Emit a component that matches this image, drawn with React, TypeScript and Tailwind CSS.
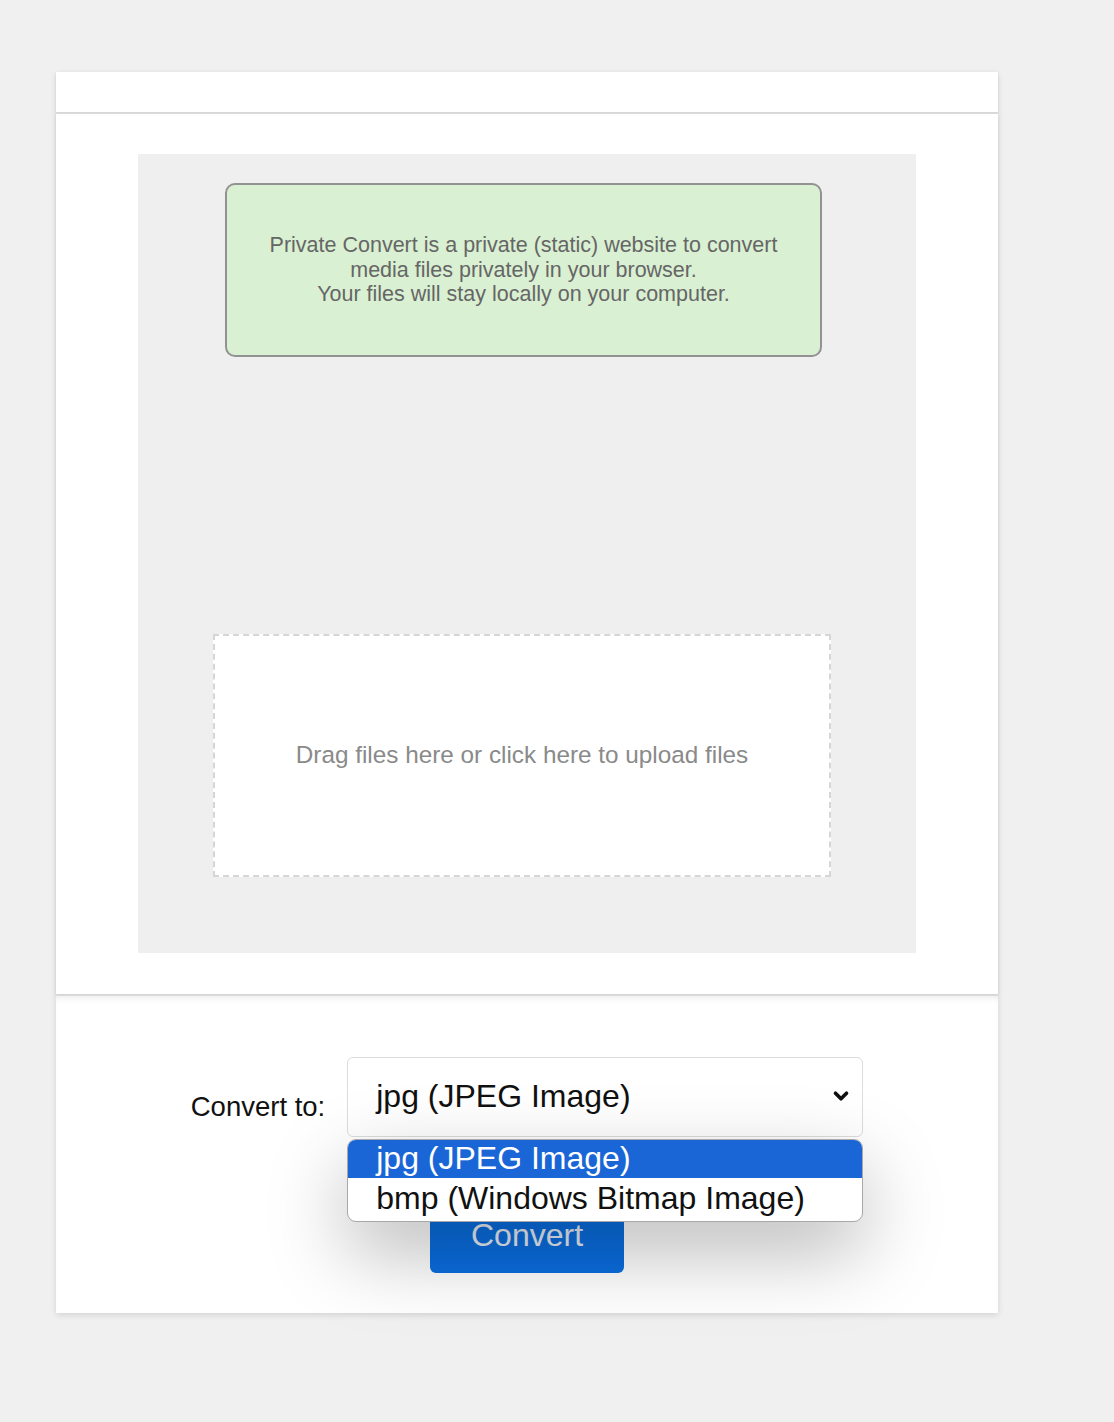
import { ChevronDown } from 'lucide-react';

const font = "font-['Liberation_Sans',Arial,sans-serif]";

export default function App() {
  return (
    <div className={`min-h-[1422px] bg-[#f0f0f0] pl-[56px] pt-[72px] ${font}`}>
      <div className="flex w-[942px] flex-col gap-[2px] bg-[#e4e4e4] shadow-[0_2px_6px_rgba(0,0,0,0.12)]">
        {/* Header strip */}
        <div className="h-[40px] bg-white shadow-[0_1px_2px_rgba(0,0,0,0.08)]" />

        {/* Upload area */}
        <div className="bg-white px-[82px] pb-[41px] pt-[40px] shadow-[0_1px_3px_rgba(0,0,0,0.1)]">
          <div className="flex h-[799px] flex-col items-start bg-[#efefef] pt-[29px]">
            <div className="ml-[87px] flex h-[174px] w-[597px] items-center justify-center rounded-[10px] border-2 border-[#929292] bg-[#d9f0d2] text-center text-[21.5px] leading-[24.5px] text-[#666]">
              <p>
                Private Convert is a private (static) website to convert
                <br />
                media files privately in your browser.
                <br />
                Your files will stay locally on your computer.
              </p>
            </div>

            <div className="ml-[75px] mt-[277px] flex h-[243px] w-[618px] cursor-pointer items-center justify-center border-2 border-dashed border-[#d6d6d6] bg-white text-[24.3px] text-[#8a8a8a]">
              Drag files here or click here to upload files
            </div>
          </div>
        </div>

        {/* Convert controls */}
        <div className="flex h-[317px] flex-col items-center bg-white pt-[61px] shadow-[inset_0_6px_8px_-6px_rgba(0,0,0,0.12)]">
          <div className="flex items-start gap-[22px]">
            <label className="mt-[34px] text-[27.5px] leading-[32px] text-[#111]">Convert to:</label>
            <div className="relative">
              <div className="flex h-[80px] w-[516px] items-center justify-between rounded-[6px] border border-[#dcdcdc] bg-white pl-[28px] pr-[10px] text-[32px] text-[#111]">
                <span className="-mt-[2px]">jpg (JPEG Image)</span>
                <ChevronDown size={22} strokeWidth={4} className="-mt-[2px] text-[#111]" />
              </div>

              {/* Open option list */}
              <div className="absolute left-0 top-[82px] z-10 w-[516px] overflow-hidden rounded-[9px] border border-[#a8a8a8] bg-white pb-[3px] text-[32px] leading-[36px] shadow-[0_30px_80px_rgba(0,0,0,0.28)]">
                <div className="h-[38px] bg-[#1a66d6] pl-[28px] text-white">jpg (JPEG Image)</div>
                <div className="h-[40px] pl-[28px] pt-[2px] text-[#111]">bmp (Windows Bitmap Image)</div>
              </div>
            </div>
          </div>

          <button className="mt-[53px] h-[83px] w-[194px] rounded-[6px] bg-[#0a6ee0] pt-[6px] text-[32px] text-[#e8eef8]">
            Convert
          </button>
        </div>
      </div>
    </div>
  );
}
